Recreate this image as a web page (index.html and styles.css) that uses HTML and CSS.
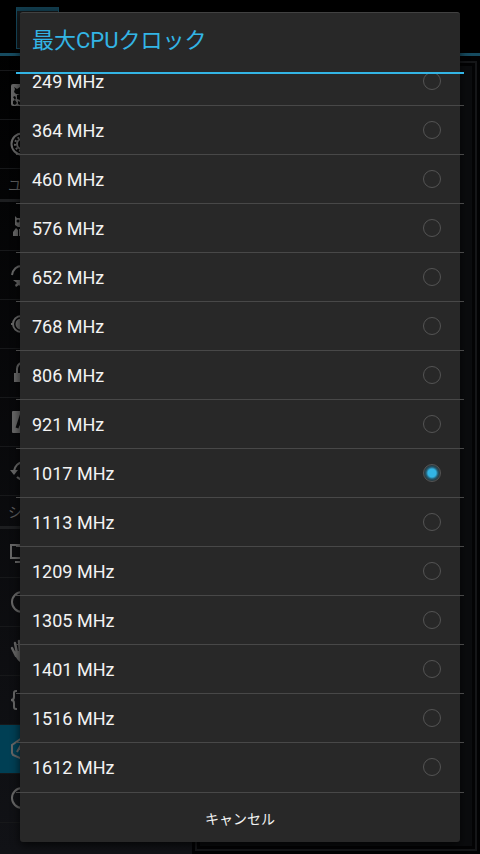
FILE: index.html
```
<!DOCTYPE html>
<html lang="ja">
<head>
<meta charset="utf-8">
<meta name="viewport" content="width=device-width, initial-scale=1">
<title>最大CPUクロック</title>
<link rel="stylesheet" href="styles.css">
</head>
<body>
<div class="backdrop" aria-hidden="true">
  <div class="topbar"><span class="app-box"></span></div>
  <div class="panes">
    <div class="sidebar">
      <div class="item"><svg class="icon" viewBox="0 0 24 24"><rect x="1" y="1" width="22" height="22" rx="2" fill="currentColor"/><path d="M4 4l1 2-1 3 2 2 4 0V4L7 6zM3 14l2-1 1 2-1 2zM7 12l3-1v6l-3-1zM3 18l2-1 2 3-2 2-2-1zM8 18l2 1v3l-2-1z" fill="#050606"/></svg></div>
      <div class="item"><svg class="icon" viewBox="0 0 24 24"><g fill="none" stroke="currentColor" stroke-width="2"><circle cx="12" cy="12" r="10.500"/><circle cx="12" cy="12" r="5"/><circle cx="12" cy="12" r="7" stroke-dasharray="2 2"/></g></svg></div>
      <div class="section">ユ</div>
      <div class="item"><svg class="icon" viewBox="0 0 24 24"><path d="M5 2l2 2h8l2-2v9l-3 2H8l-3-2zM3 22v-4l3-4 2 2v6zM9 15h6l5 3v4H9z" fill="currentColor"/><circle cx="8" cy="7" r="1.500" fill="#060708"/></svg></div>
      <div class="item"><svg class="icon" viewBox="0 0 24 24"><path d="M2 12C3 7 6 3 12 3M22 11c0 6-4 10-10 10" fill="none" stroke="currentColor" stroke-width="2"/><path d="M3 17h8v7l-2-2-3 2-1-2 2-2z" fill="currentColor"/></svg></div>
      <div class="item"><svg class="icon" viewBox="0 0 24 24"><circle cx="11" cy="12" r="8" fill="none" stroke="currentColor" stroke-width="2"/><circle cx="11" cy="12" r="5.500" fill="currentColor"/><path d="M1 12h3M11 1v4M11 20v4M19 12h4" stroke="currentColor" stroke-width="2"/></svg></div>
      <div class="item"><svg class="icon" viewBox="0 0 24 24"><path d="M4 12h16v9H4z" fill="currentColor"/><path d="M7 12V8a5 6 0 0 1 10 0v4" fill="none" stroke="currentColor" stroke-width="2"/></svg></div>
      <div class="item"><svg class="icon" viewBox="0 0 24 24"><rect x="2" y="1" width="21" height="22" rx="1" fill="currentColor"/><path d="M7 18L11 6h2l4 12M9 14h7" fill="none" stroke="#090a0b" stroke-width="3"/></svg></div>
      <div class="item"><svg class="icon" viewBox="0 0 24 24"><path d="M4 12C5 7 7 4 13 3M7 18c2 2 5 3 8 2" fill="none" stroke="currentColor" stroke-width="2"/><path d="M0 11h8l-4 5z" fill="currentColor"/></svg></div>
      <div class="section">シ</div>
      <div class="item"><svg class="icon" viewBox="0 0 24 24"><path d="M1 4h22v13H1zM5 21h14" fill="none" stroke="currentColor" stroke-width="2"/></svg></div>
      <div class="item"><svg class="icon" viewBox="0 0 24 24"><circle cx="12" cy="12" r="10" fill="none" stroke="currentColor" stroke-width="2"/></svg></div>
      <div class="item"><svg class="icon" viewBox="0 0 24 24"><path d="M2 9l4 8M5 4l2 10M9 2l1 11M14 3l-1 10" stroke="currentColor" stroke-width="2.500" stroke-linecap="round"/><path d="M4 13l2-1h10l5-4-4 11-3 4h-4c-3-2-5-6-6-10z" fill="currentColor"/></svg></div>
      <div class="item"><svg class="icon" viewBox="0 0 24 24"><path d="M7 3H6Q4 3 4 5v4q0 3-3 3 3 0 3 3v4q0 2 2 2h1M17 3h1q2 0 2 2v4q0 3 3 3-3 0-3 3v4q0 2-2 2h-1" fill="none" stroke="currentColor" stroke-width="2"/></svg></div>
      <div class="item selected"><svg class="icon" viewBox="0 0 24 24"><path d="M12 1l9 6v10l-9 5-9-4-1-2V8z" fill="none" stroke="currentColor" stroke-width="2"/><path d="M7 15l5-9 5 9M9 12h6" fill="none" stroke="currentColor" stroke-width="2"/></svg></div>
      <div class="item"><svg class="icon" viewBox="0 0 24 24"><circle cx="12" cy="12" r="10" fill="none" stroke="currentColor" stroke-width="2"/></svg></div>
    </div>
    <div class="detail"><div class="detail-inner"></div></div>
  </div>
</div>
<form class="dialog" role="dialog" aria-labelledby="title">
  <h1 class="title" id="title">最大CPUクロック</h1>
  <div class="list">
    <div class="options">
      <label class="option">249 MHz<input type="radio" name="clock"></label>
      <label class="option">364 MHz<input type="radio" name="clock"></label>
      <label class="option">460 MHz<input type="radio" name="clock"></label>
      <label class="option">576 MHz<input type="radio" name="clock"></label>
      <label class="option">652 MHz<input type="radio" name="clock"></label>
      <label class="option">768 MHz<input type="radio" name="clock"></label>
      <label class="option">806 MHz<input type="radio" name="clock"></label>
      <label class="option">921 MHz<input type="radio" name="clock"></label>
      <label class="option">1017 MHz<input type="radio" name="clock" checked></label>
      <label class="option">1113 MHz<input type="radio" name="clock"></label>
      <label class="option">1209 MHz<input type="radio" name="clock"></label>
      <label class="option">1305 MHz<input type="radio" name="clock"></label>
      <label class="option">1401 MHz<input type="radio" name="clock"></label>
      <label class="option">1516 MHz<input type="radio" name="clock"></label>
      <label class="option">1612 MHz<input type="radio" name="clock"></label>
    </div>
  </div>
  <button class="cancel" type="button">キャンセル</button>
</form>
</body>
</html>
```
FILE: styles.css
```
* { box-sizing: border-box; }
body {
  margin: 0;
  min-height: 100vh;
  background: #000;
  color: #f3f3f3;
  font-family: Roboto, "Noto Sans CJK JP", sans-serif;
}

/* Dimmed settings screen behind the dialog */
.backdrop {
  position: fixed;
  inset: 0;
  display: flex;
  flex-direction: column;
  background: linear-gradient(#000, #111216);
}
.topbar {
  height: 56px;
  padding: 7px 16px 0;
  background: #000;
  border-bottom: 3px solid #164b60;
}
.app-box {
  display: block;
  width: 43px;
  height: 42px;
  background: #15191b;
  border: 1px solid #164b60;
  border-top: 4px solid #123d4e;
}
.panes { flex: 1; display: flex; min-height: 0; }
.sidebar { width: 40%; padding-top: 14px; }
.item {
  display: flex;
  align-items: center;
  height: 49px;
  padding-left: 10px;
  color: #666;
  border-bottom: 1px solid #17181a;
}
.item:first-child { height: 50px; border-top: 1px solid #17181a; }
.item.selected { background: #003f54; }
.icon { width: 24px; height: 24px; }
.section {
  height: 33px;
  padding-left: 8px;
  font-size: 14px;
  line-height: 32px;
  color: #5c5c5c;
  border-bottom: 3px solid #1d1e20;
}
.detail {
  flex: 1;
  padding: 5px 3px 3px;
  background: #020203;
}
.detail-inner {
  height: 100%;
  background: #0b0c0e;
  border: 2px solid #151618;
  box-shadow: inset 0 0 0 3px #030304;
}

/* Single-choice dialog */
.dialog {
  position: fixed;
  inset: 12px 20px;
  display: flex;
  flex-direction: column;
  height: fit-content;
  background: #282828;
  border-top: 1px solid #414141;
  border-radius: 3px;
  box-shadow: 0 3px 10px rgba(0, 0, 0, 0.7);
}
.title {
  height: 61px;
  margin: 0 -4px;
  padding: 0 16px;
  border-bottom: 2px solid #33b5e5;
  color: #33b5e5;
  font-size: 22px;
  font-weight: 400;
  line-height: 56px;
}
.list {
  display: flex;
  flex-direction: column;
  justify-content: flex-end;
  height: 718px;
  margin: 0 -4px;
  overflow: hidden;
}
.option {
  display: flex;
  align-items: center;
  justify-content: space-between;
  height: 49px;
  padding: 0 23px 0 16px;
  border-bottom: 1px solid #484848;
  font-size: 18px;
}
.option:last-child { border-bottom-color: transparent; }
.option input {
  appearance: none;
  width: 18px;
  height: 18px;
  margin: 0;
  border: 1px solid #545454;
  border-radius: 50%;
}
.option input:checked {
  background: radial-gradient(circle, #33b5e5 4px, #24586c 6px, #29363b 8px);
}
.cancel {
  height: 50px;
  margin: 0 -4px;
  padding: 0;
  border: 0;
  border-top: 1px solid #484848;
  background: none;
  color: #f3f3f3;
  font: 14px Roboto, "Noto Sans CJK JP", sans-serif;
}
```
